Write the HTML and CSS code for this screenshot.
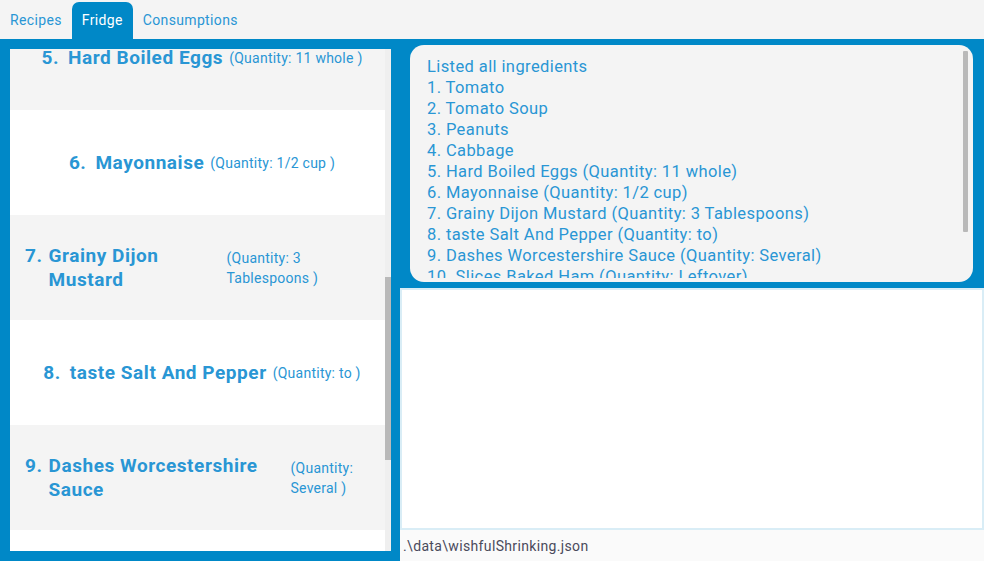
FILE: index.html
```html
<!DOCTYPE html>
<html>
<head>
<meta charset="utf-8">
<link rel="stylesheet" href="styles.css">
</head>
<body>
<div class="app">
  <div class="tabs">
    <div class="tab">Recipes</div>
    <div class="tab active">Fridge</div>
    <div class="tab">Consumptions</div>
  </div>
  <div class="main">
    <div class="left">
      <div class="list">
        <div class="cells">
          <div class="cell shade first">
            <span class="lead"><span class="num gap-wide">5.</span><span class="name">Hard Boiled Eggs</span></span><span class="qty">(Quantity: 11 whole )</span>
          </div>
          <div class="cell">
            <span class="lead"><span class="num gap-wide">6.</span><span class="name">Mayonnaise</span></span><span class="qty">(Quantity: 1/2 cup )</span>
          </div>
          <div class="cell shade wrap">
            <span class="lead"><span class="num">7.</span><span class="name name-7">Grainy Dijon Mustard</span></span><span class="qty qty-7">(Quantity: 3 Tablespoons )</span>
          </div>
          <div class="cell">
            <span class="lead"><span class="num gap-wide">8.</span><span class="name">taste Salt And Pepper</span></span><span class="qty">(Quantity: to )</span>
          </div>
          <div class="cell shade wrap">
            <span class="lead"><span class="num">9.</span><span class="name name-9">Dashes Worcestershire Sauce</span></span><span class="qty qty-9">(Quantity: Several )</span>
          </div>
          <div class="cell">
            <span class="lead"><span class="num gap-wide">10.</span><span class="name">Slices Baked Ham</span></span><span class="qty">(Quantity: Leftover )</span>
          </div>
        </div>
        <div class="vscroll"><div class="thumb"></div></div>
      </div>
    </div>
    <div class="right">
      <div class="result-wrap">
        <div class="result-box">
          <div class="result-text">
            <div class="lines">
              <div>Listed all ingredients</div>
              <div>1. Tomato</div>
              <div>2. Tomato Soup</div>
              <div>3. Peanuts</div>
              <div>4. Cabbage</div>
              <div>5. Hard Boiled Eggs (Quantity: 11 whole)</div>
              <div>6. Mayonnaise (Quantity: 1/2 cup)</div>
              <div>7. Grainy Dijon Mustard (Quantity: 3 Tablespoons)</div>
              <div>8. taste Salt And Pepper (Quantity: to)</div>
              <div>9. Dashes Worcestershire Sauce (Quantity: Several)</div>
              <div>10. Slices Baked Ham (Quantity: Leftover)</div>
            </div>
          </div>
          <div class="rscroll"><div class="rthumb"></div></div>
        </div>
      </div>
      <div class="blank"></div>
      <div class="status">.\data\wishfulShrinking.json</div>
    </div>
  </div>
</div>
</body>
</html>
```
FILE: styles.css
```css
* { box-sizing: border-box; }
html, body { margin: 0; padding: 0; }
body {
  width: 984px;
  height: 561px;
  overflow: hidden;
  font-family: Roboto, "Liberation Sans", sans-serif;
  background: #f4f4f4;
}
.app { display: flex; flex-direction: column; height: 561px; }

.tabs {
  height: 39px;
  display: flex;
  align-items: flex-end;
  background: #f4f4f4;
}
.tab {
  height: 37px;
  padding: 0 10px 2px;
  display: flex;
  align-items: center;
  font-size: 14px;
  letter-spacing: 0.35px;
  color: #2996d4;
  border-radius: 7px 7px 0 0;
}
.tab.active { background: #0088c7; color: #ffffff; }

.main {
  flex: 1;
  display: flex;
  background: #0088c7;
}
.left {
  width: 400px;
  padding: 10px 9px 10px 10px;
}
.list {
  height: 502px;
  display: flex;
  background: #ffffff;
}
.cells {
  width: 375px;
  overflow: hidden;
}
.cell {
  height: 105px;
  display: flex;
  align-items: center;
  justify-content: center;
  padding: 0 6px 0 15px;
  background: #ffffff;
  color: #2996d4;
}
.cell.first { margin-top: -44px; }
.cell.shade { background: #f4f4f4; }
.cell.wrap { justify-content: flex-start; }
.lead {
  display: flex;
  align-items: baseline;
}
.num {
  font-weight: bold;
  font-size: 19px;
  letter-spacing: 0.55px;
  line-height: 24px;
  margin-right: 6px;
  white-space: nowrap;
}
.num.gap-wide { margin-right: 9px; }
.name {
  font-weight: bold;
  font-size: 19px;
  letter-spacing: 0.55px;
  line-height: 24px;
  white-space: nowrap;
}
.qty {
  font-size: 14px;
  letter-spacing: 0.25px;
  line-height: 20px;
  margin-left: 6px;
  white-space: nowrap;
}
.name-7 { width: 172px; white-space: normal; }
.qty-7 { width: 100px; white-space: normal; }
.name-9 { width: 236px; white-space: normal; }
.qty-9 { width: 75px; white-space: normal; }

.vscroll {
  width: 6px;
  background: #efefef;
}
.thumb {
  margin-top: 228px;
  height: 183px;
  background: #b9b9b9;
}

.right {
  width: 584px;
  display: flex;
  flex-direction: column;
}
.result-wrap {
  height: 249px;
  padding: 6px 11px 6px 10px;
}
.result-box {
  height: 237px;
  background: #f4f4f4;
  border-radius: 14px;
  overflow: hidden;
  display: flex;
}
.result-text {
  flex: 1;
  padding: 11px 17px 0;
  font-size: 16.5px;
  letter-spacing: 0.4px;
  line-height: 21px;
  color: #2996d4;
  white-space: nowrap;
}
.lines {
  height: 222px;
  overflow: hidden;
}
.rscroll {
  width: 5px;
  margin: 6px 5px 0 0;
}
.rthumb {
  height: 181px;
  background: #b9b9b9;
  border-radius: 1px;
}
.blank {
  height: 242px;
  background: #ffffff;
  border: 2px solid #d9edf6;
}
.status {
  flex: 1;
  background: #fafafa;
  padding: 8px 3px 0;
  font-size: 14px;
  letter-spacing: 0.35px;
  color: #4a4a5c;
}
```
